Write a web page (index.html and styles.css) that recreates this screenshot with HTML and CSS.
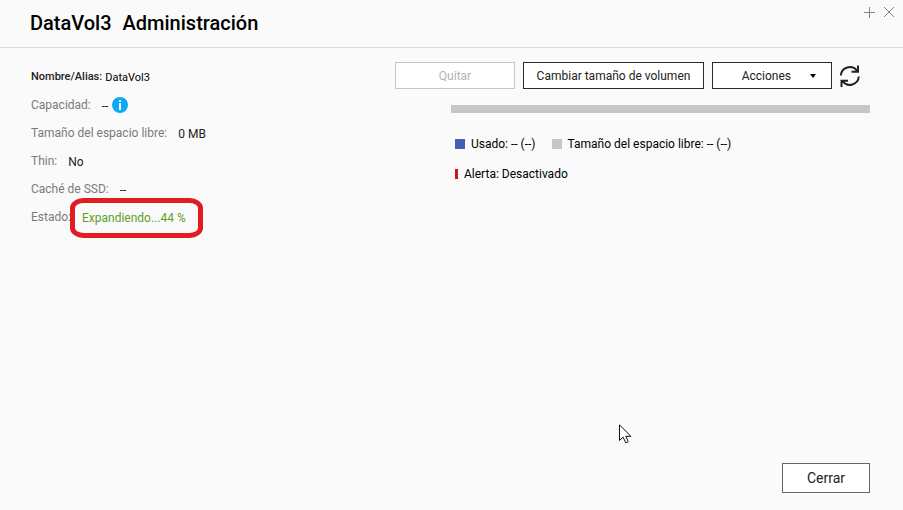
FILE: index.html
```html
<!DOCTYPE html>
<html lang="es">
<head>
    <meta charset="UTF-8">
    <meta name="viewport" content="width=device-width, initial-scale=1.0">
    <title>DataVol3 Administración</title>
    <link rel="stylesheet" href="styles.css">
</head>
<body>
    <header class="header">
        <h1><span>DataVol3</span> <span>Administración</span></h1>
        <div class="window-buttons">
            <button type="button" aria-label="Maximizar">
                <svg width="12" height="12" viewBox="0 0 12 12"><path d="M6.5 1v11M1 6.5h11"/></svg>
            </button>
            <button type="button" aria-label="Cerrar ventana">
                <svg width="12" height="12" viewBox="0 0 12 12"><path d="M1 1l10 10M11 1L1 11"/></svg>
            </button>
        </div>
    </header>

    <main class="content">
        <dl class="details">
            <div class="row name">
                <dt>Nombre/Alias:</dt>
                <dd>DataVol3</dd>
            </div>
            <div class="row">
                <dt>Capacidad:</dt>
                <dd>--</dd>
                <dd class="info">
                    <svg width="16" height="16" viewBox="0 0 16 16">
                        <circle cx="8" cy="8" r="8" fill="#0caaf5"/>
                        <path d="M7 3h2v2H7zM7 6h2v7H7z" fill="#fff"/>
                    </svg>
                </dd>
            </div>
            <div class="row">
                <dt>Tamaño del espacio libre:</dt>
                <dd>0 MB</dd>
            </div>
            <div class="row">
                <dt>Thin:</dt>
                <dd>No</dd>
            </div>
            <div class="row">
                <dt>Caché de SSD:</dt>
                <dd>--</dd>
            </div>
            <div class="row">
                <dt>Estado:</dt>
                <dd class="status">Expandiendo...44 %</dd>
            </div>
        </dl>

        <section class="volume">
            <div class="toolbar">
                <button type="button" class="btn" disabled>Quitar</button>
                <button type="button" class="btn btn-wide">Cambiar tamaño de volumen</button>
                <button type="button" class="btn btn-menu">Acciones
                    <svg width="6" height="4" viewBox="0 0 6 4"><path d="M0 0h6L3 4z"/></svg>
                </button>
                <button type="button" class="refresh" aria-label="Actualizar">
                    <svg width="24" height="24" viewBox="0 0 24 24">
                        <path d="M2.8 11.5A9 9 0 0 1 19 6.8M20 1.5v6.3h-6.5"/>
                        <path d="M20.8 12.5A9 9 0 0 1 4.6 17.2M3.5 23v-6.3H10"/>
                    </svg>
                </button>
            </div>
            <div class="usage">
                <div class="bar"></div>
                <ul class="legend">
                    <li><i class="mark used"></i>Usado: -- (--)</li>
                    <li><i class="mark free"></i>Tamaño del espacio libre: -- (--)</li>
                    <li><i class="mark alert"></i>Alerta: Desactivado</li>
                </ul>
            </div>
        </section>
    </main>

    <footer class="footer">
        <button type="button" class="btn-close">Cerrar</button>
    </footer>

    <svg class="cursor" width="13" height="20" viewBox="0 0 13 20">
        <path d="M.5.8v15.7l3.6-3.4 2.5 5.4q2 .6 2.5-1.2L6.8 12.3h5.1z"/>
    </svg>
</body>
</html>
```
FILE: styles.css
```css
:root {
    --bg: #fafafa;
    --text: #000000;
    --muted: #7a7a7a;
    --border: #2b2b2b;
    --grey: #c6c6c6;
}

* {
    box-sizing: border-box;
}

body {
    font-family: Roboto, sans-serif;
    font-size: 12px;
    line-height: 16px;
    background-color: var(--bg);
    color: var(--text);
    margin: 0;
    min-height: 100vh;
    display: flex;
    flex-direction: column;
}

button {
    font-family: inherit;
    padding: 0;
    cursor: pointer;
}

/* Cabecera */
.header {
    display: flex;
    justify-content: space-between;
    height: 48px;
    padding-left: 30px;
    border-bottom: 1px solid #dcdcdc;
}

h1 {
    display: flex;
    gap: 11px;
    margin: 0;
    font-size: 20px;
    font-weight: 500;
    line-height: 46px;
}

.window-buttons {
    display: flex;
    align-items: flex-start;
    gap: 8px;
    padding: 6px 8px;
}

.window-buttons button {
    border: none;
    background: none;
    height: 12px;
}

.window-buttons svg {
    display: block;
    fill: none;
    stroke: #858585;
}

/* Contenido */
.content {
    flex: 1;
    display: flex;
    justify-content: space-between;
    padding: 14px 33px 0 31px;
}

.details {
    margin: 0;
    padding-top: 7px;
}

.row {
    display: flex;
    align-items: center;
    gap: 11px;
    height: 16px;
    margin-bottom: 12px;
}

.row dt {
    color: var(--muted);
}

.row dd {
    margin: 0;
    padding-top: 2px;
    color: #222;
}

.name {
    gap: 3px;
    font-size: 11px;
}

.name dt {
    font-weight: 500;
    color: #222;
}

.name dd {
    color: var(--text);
}

.row .info {
    margin-left: -7px;
    padding: 0;
}

.info svg {
    display: block;
}

.row .status {
    position: relative;
    color: #5fa01e;
}

/* Marco rojo sobre el estado */
.status::after {
    content: "";
    position: absolute;
    inset: -10px -17px -12px -12px;
    border: 5px solid #e31b23;
    border-radius: 14px / 10px;
}

.toolbar {
    display: flex;
    gap: 8px;
}

.btn {
    width: 120px;
    height: 27px;
    font-size: 12px;
    color: #222;
    background-color: #fff;
    border: 1px solid var(--border);
}

.btn:disabled {
    color: #b4b4b4;
    border-color: var(--grey);
    cursor: default;
}

.btn-wide {
    width: 181px;
}

.btn-menu {
    display: flex;
    align-items: center;
    justify-content: flex-end;
    gap: 19px;
    padding-right: 15px;
}

.refresh {
    width: 24px;
    height: 27px;
    margin-left: -2px;
    margin-right: 8px;
    border: none;
    background: none;
}

.refresh svg {
    display: block;
    fill: none;
    stroke: #222;
    stroke-width: 2;
}

.usage {
    padding: 16px 0 0 56px;
}

.bar {
    height: 8px;
    background-color: var(--grey);
}

.legend {
    display: flex;
    flex-wrap: wrap;
    gap: 14px 16px;
    list-style: none;
    margin: 23px 0 0;
    padding: 0 4px;
}

.legend li {
    display: flex;
    align-items: center;
    gap: 6px;
}

.legend li:last-child {
    flex-basis: 100%;
}

.mark {
    width: 10px;
    height: 10px;
}

.used {
    background-color: #435fb8;
}

.free {
    background-color: var(--grey);
}

.alert {
    width: 3px;
    background-color: #c8161d;
}

.footer {
    display: flex;
    justify-content: flex-end;
    padding: 0 33px 17px;
}

.btn-close {
    width: 88px;
    height: 30px;
    font-size: 14px;
    color: #222;
    background-color: #fff;
    border: 1px solid #666;
}

.cursor {
    position: absolute;
    left: 619px;
    top: 424px;
    fill: #fff;
    stroke: #111;
    pointer-events: none;
}
```
